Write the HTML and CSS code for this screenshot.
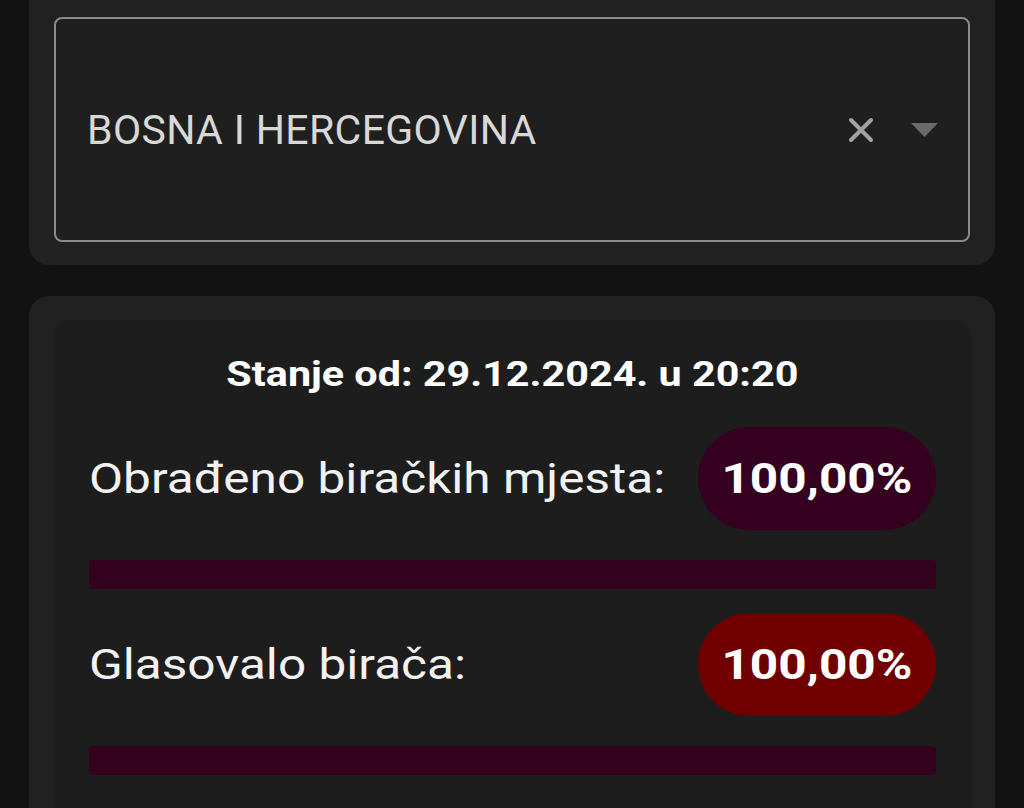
FILE: index.html
```html
<!DOCTYPE html>
<html lang="bs">
<head>
<meta charset="utf-8">
<link rel="stylesheet" href="styles.css">
</head>
<body>
<div class="page">
  <section class="card card-top">
    <div class="select">
      <span class="select-value">BOSNA I HERCEGOVINA</span>
      <div class="select-icons">
        <svg class="icon-clear" width="26" height="26" viewBox="0 0 26 26"><path d="M3 3 L23 23 M23 3 L3 23" stroke="#a3a3a3" stroke-width="4" stroke-linecap="round"/></svg>
        <svg class="icon-arrow" width="27" height="14" viewBox="0 0 27 14"><path d="M0 0 H27 L13.5 14 Z" fill="#6b6b6b"/></svg>
      </div>
    </div>
  </section>
  <section class="card card-stats">
    <div class="panel">
      <h2 class="title"><span class="wide wide-center">Stanje od: 29.12.2024. u 20:20</span></h2>
      <div class="row">
        <span class="label"><span class="wide">Obrađeno biračkih mjesta:</span></span>
        <span class="pill pill-purple"><span class="wide wide-center">100,00%</span></span>
      </div>
      <div class="bar"></div>
      <div class="row">
        <span class="label"><span class="wide">Glasovalo birača:</span></span>
        <span class="pill pill-red"><span class="wide wide-center">100,00%</span></span>
      </div>
      <div class="bar"></div>
    </div>
  </section>
</div>
</body>
</html>
```

FILE: styles.css
```css
html, body {
  margin: 0;
  padding: 0;
  background: #121212;
  font-family: Roboto, "Liberation Sans", sans-serif;
  height: 808px;
  overflow: hidden;
}

.page {
  padding: 0 29px;
}

.card {
  background: #212121;
  border-radius: 20px;
}

.card-top {
  border-radius: 0 0 20px 20px;
  padding: 17px 25px 23px;
}

.select {
  height: 221px;
  border: 2px solid #8a8a8a;
  border-radius: 8px;
  background: #1f1f1f;
  display: flex;
  align-items: center;
  justify-content: space-between;
  padding: 0 30px 0 31px;
}

.select-value {
  color: #d8d8d8;
  font-size: 41px;
  letter-spacing: 0.35px;
  margin-top: 0;
}

.select-icons {
  display: flex;
  align-items: center;
  gap: 37px;
}

.icon-clear {
  display: block;
  margin-top: 0;
}

.icon-arrow {
  display: block;
}

.card-stats {
  margin-top: 31px;
  padding: 24px 24px 0 25px;
  height: 512px;
  box-sizing: border-box;
  border-radius: 20px 20px 0 0;
}

.panel {
  background: #1d1d1d;
  border-radius: 16px 16px 0 0;
  padding: 34px 35px 0;
  height: 100%;
  box-sizing: border-box;
}

.wide {
  display: inline-block;
  transform: scaleX(1.18);
  transform-origin: left center;
  white-space: nowrap;
}

.wide-center {
  transform-origin: center center;
}

.title {
  margin: 0 0 31px;
  text-align: center;
  color: #ffffff;
  font-size: 35px;
  line-height: 42px;
  font-weight: 700;
}

.row {
  display: flex;
  align-items: center;
  justify-content: space-between;
}

.label {
  color: #f2f2f2;
  font-size: 42px;
}

.pill {
  width: 238px;
  height: 103px;
  border-radius: 52px;
  display: flex;
  align-items: center;
  justify-content: center;
  color: #ffffff;
  font-size: 42px;
  font-weight: 700;
}

.pill-purple {
  background: #35001f;
}

.pill-red {
  background: #700000;
}

.bar {
  height: 29px;
  background: #33001e;
  border-radius: 4px;
  margin: 30px 0 24px;
}
```
